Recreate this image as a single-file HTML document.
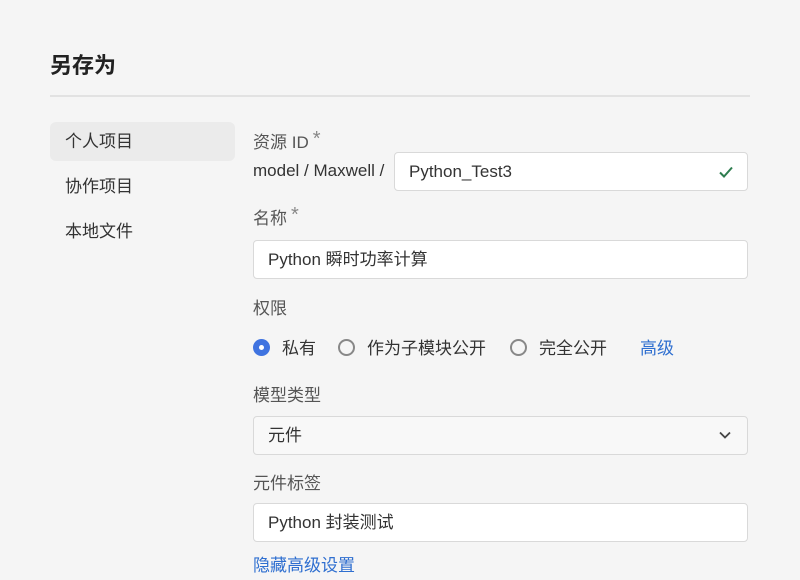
<!DOCTYPE html>
<html><head><meta charset="utf-8"><style>
*{box-sizing:border-box;margin:0;padding:0}
body{width:800px;height:580px;background:#f5f5f5;font-family:"Liberation Sans","Noto Sans CJK SC",sans-serif;color:#333;position:relative;overflow:hidden;font-size:17px}
.a{position:absolute;white-space:nowrap}
.title{left:50px;top:48px;font-size:22px;font-weight:bold;color:#222}
.hr{left:50px;top:95px;width:700px;height:2px;background:#e2e2e2}
.side{left:50px;width:185px;height:39px;line-height:39px;padding-left:15px;color:#333}
.sel{background:#ebebeb;border-radius:6px}
.lbl{left:253px;color:#555}
.lbl i{font-style:normal;color:#888;font-size:20px;position:relative;top:-3px;margin-left:4px}
.inp{background:#fff;border:1px solid #d9d9d9;border-radius:4px;height:39px;line-height:37px;padding-left:14px;color:#333}
.radio{width:17px;height:17px;border-radius:50%;border:2px solid #888;top:339px}
.on{border:none;background:#3f73e0}
.on:after{content:"";position:absolute;left:6px;top:6px;width:5px;height:5px;border-radius:50%;background:#fff}
.link{color:#2f6fd0}
</style></head><body>
<div class="a title">另存为</div>
<div class="a hr"></div>
<div class="a side sel" style="top:122px">个人项目</div>
<div class="a side" style="top:167px">协作项目</div>
<div class="a side" style="top:212px">本地文件</div>

<div class="a lbl" style="top:128px">资源 ID<i>*</i></div>
<div class="a" style="left:253px;top:161px;color:#333">model / Maxwell /</div>
<div class="a inp" style="left:394px;top:152px;width:354px">Python_Test3</div>
<svg class="a" style="left:718px;top:164px" width="16" height="16" viewBox="0 0 16 16"><path d="M2 8.5l4 4 8-9" fill="none" stroke="#2e7d4f" stroke-width="2"/></svg>

<div class="a lbl" style="top:204px">名称<i>*</i></div>
<div class="a inp" style="left:253px;top:240px;width:495px">Python 瞬时功率计算</div>

<div class="a lbl" style="top:294px">权限</div>
<div class="a radio on" style="left:253px"></div>
<div class="a" style="left:282px;top:334px">私有</div>
<div class="a radio" style="left:338px"></div>
<div class="a" style="left:367px;top:334px">作为子模块公开</div>
<div class="a radio" style="left:510px"></div>
<div class="a" style="left:539px;top:334px">完全公开</div>
<div class="a link" style="left:640px;top:334px">高级</div>

<div class="a lbl" style="top:381px">模型类型</div>
<div class="a inp" style="left:253px;top:416px;width:495px;background:#f8f8f8">元件</div>
<svg class="a" style="left:718px;top:428px" width="14" height="14" viewBox="0 0 14 14"><path d="M2 4.5l5 5 5-5" fill="none" stroke="#444" stroke-width="1.8"/></svg>

<div class="a lbl" style="top:469px">元件标签</div>
<div class="a inp" style="left:253px;top:503px;width:495px">Python 封装测试</div>
<div class="a link" style="left:253px;top:551px">隐藏高级设置</div>
</body></html>
